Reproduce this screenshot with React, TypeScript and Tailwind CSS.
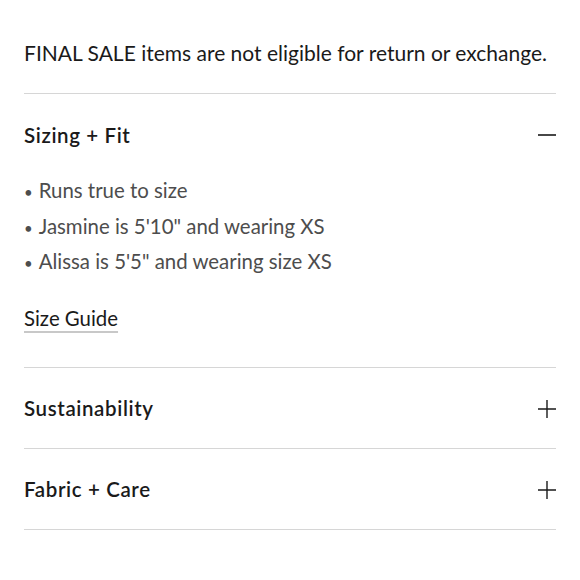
import { useState } from "react";

type Section = {
  title: string;
  body?: React.ReactNode;
};

const fit = ["Runs true to size", "Jasmine is 5'10\" and wearing XS", "Alissa is 5'5\" and wearing size XS"];

function Minus() {
  return (
    <svg width="18" height="18" viewBox="0 0 18 18" fill="none" stroke="#1a1a1a" strokeWidth="1.6">
      <path d="M0 9h18" />
    </svg>
  );
}

function Plus() {
  return (
    <svg width="18" height="18" viewBox="0 0 18 18" fill="none" stroke="#1a1a1a" strokeWidth="1.4">
      <path d="M0 9h18M9 0v18" />
    </svg>
  );
}

function AccordionItem({ title, body, open, onToggle }: Section & { open: boolean; onToggle: () => void }) {
  return (
    <div className="border-b border-[#d6d6d6]">
      <button onClick={onToggle} className="flex h-[80px] w-full items-center justify-between pt-0.5 text-left">
        <span className="text-[20.5px] font-semibold tracking-[0.03em] text-[#1a1a1a]">{title}</span>
        {open ? <Minus /> : <Plus />}
      </button>
      {open && body}
    </div>
  );
}

export default function App() {
  const [open, setOpen] = useState<string | null>("Sizing + Fit");

  const sections: Section[] = [
    {
      title: "Sizing + Fit",
      body: (
        <div className="-mt-px pb-[31px]">
          <ul className="text-[20.4px] leading-[35.5px] text-[#4d4d4d]">
            {fit.map((line) => (
              <li key={line}>
                <span className="mr-[6px] text-[15px] leading-none">•</span>
                {line}
              </li>
            ))}
          </ul>
          <a href="#" className="mt-[21px] inline-block text-[20.4px] leading-[35px] text-[#1a1a1a] underline decoration-[#c8c8c8] decoration-[1.5px] underline-offset-[5px]">
            Size Guide
          </a>
        </div>
      ),
    },
    { title: "Sustainability" },
    { title: "Fabric + Care" },
  ];

  return (
    <div className="min-h-screen bg-white px-6 pt-[35px] font-['Lato',sans-serif]">
      <p className="border-b border-[#d6d6d6] pb-[22px] text-[21px] leading-[36px] text-[#1a1a1a]">
        FINAL SALE items are not eligible for return or exchange.
      </p>
      {sections.map((s) => (
        <AccordionItem
          key={s.title}
          {...s}
          open={open === s.title}
          onToggle={() => setOpen(open === s.title ? null : s.title)}
        />
      ))}
    </div>
  );
}
